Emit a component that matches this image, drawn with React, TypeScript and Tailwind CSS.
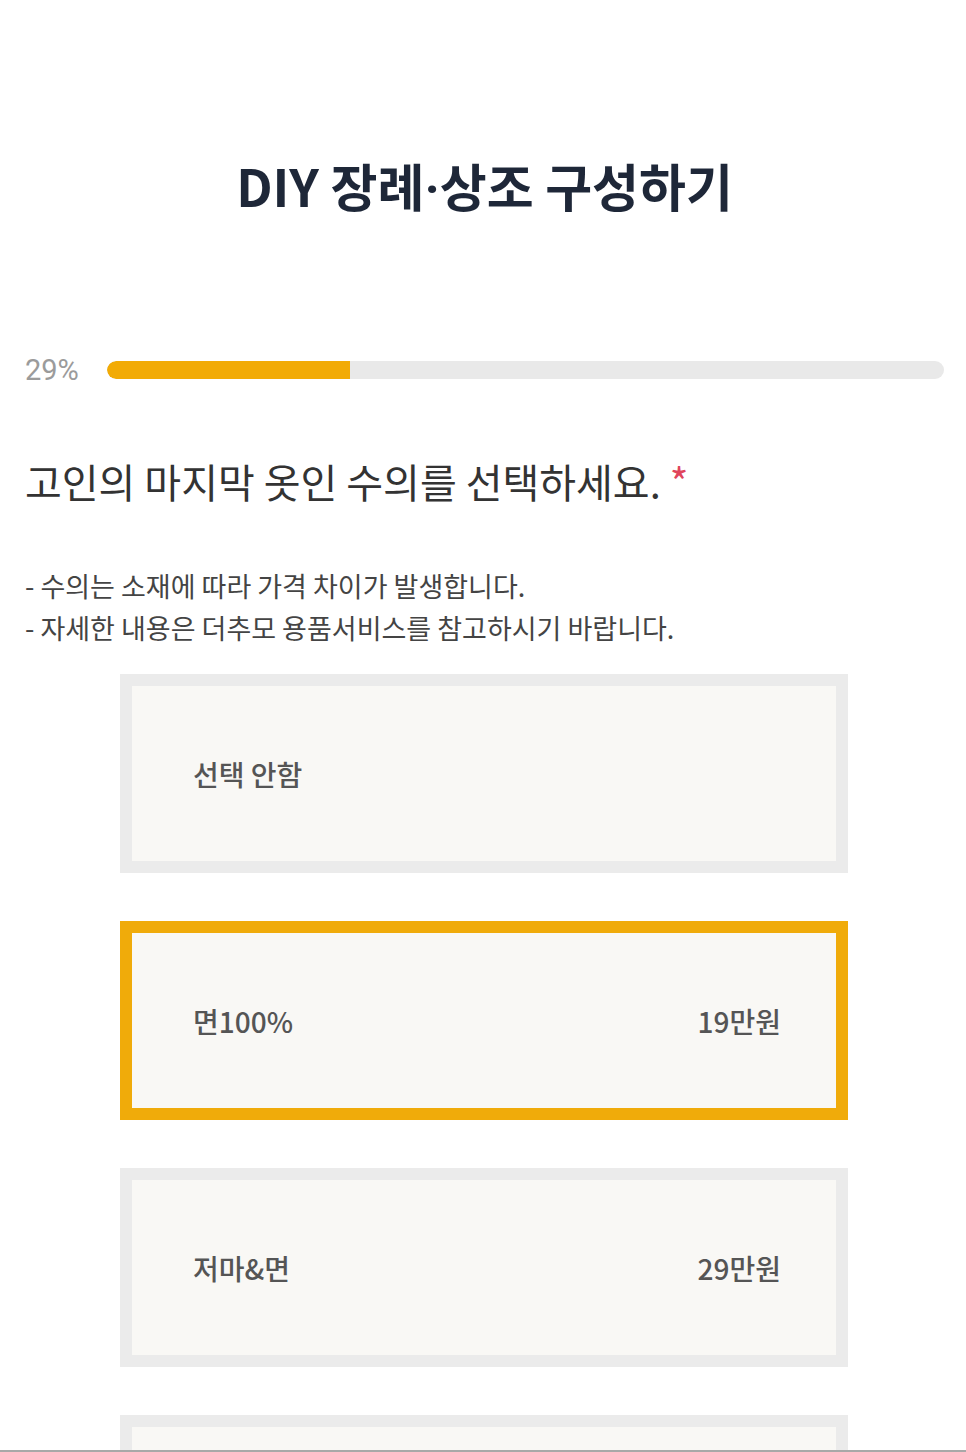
import React from 'react';

interface Option {
  label?: string;
  price?: string;
}

const options: Option[] = [
  { label: '선택 안함' },
  { label: '면100%', price: '19만원' },
  { label: '저마&면', price: '29만원' },
  {},
];

const kr = { fontFamily: '"Noto Sans CJK KR", "Noto Sans", sans-serif' };

function ProgressBar({ percent }: { percent: number }) {
  return (
    <div className="flex items-center h-[24px]">
      <span className="w-[82px] text-[29px] leading-[24px] text-[#9b9b9b]" style={{ fontFamily: 'Roboto, "Liberation Sans", sans-serif' }}>
        {percent}%
      </span>
      <div className="flex-1 h-[18px] rounded-full bg-[#e9e9e9] overflow-hidden">
        <div className="h-full rounded-l-full bg-[#f2ab05]" style={{ width: `${percent}%` }} />
      </div>
    </div>
  );
}

function OptionCard({ option, selected }: { option: Option; selected: boolean }) {
  return (
    <div
      className={
        selected
          ? 'h-[199px] border-[12px] border-[#f0ab0a] bg-[#f9f8f5] flex items-center justify-between pl-[61px] pr-[55px]'
          : 'h-[199px] border-[12px] border-[#ebebeb] bg-[#f9f8f5] flex items-center justify-between pl-[61px] pr-[55px]'
      }
    >
      {option.label && <span className="text-[28px] font-medium text-[#555555]">{option.label}</span>}
      {option.price && <span className="text-[28px] font-medium text-[#555555]">{option.price}</span>}
    </div>
  );
}

export default function App() {
  return (
    <div className="min-h-screen bg-white pl-[25px] pr-[22px] pb-[60px]" style={kr}>
      <h1 className="pt-[155px] text-center text-[51px] leading-[60px] font-bold text-[#1e2738]">
        DIY 장례<span className="leading-none" style={{ fontFamily: 'Roboto, sans-serif' }}>·</span>상조 구성하기
      </h1>

      <div className="mt-[143px]">
        <ProgressBar percent={29} />
      </div>

      <h2 className="mt-[76px] text-[40px] leading-[46px] font-normal text-[#333333]">
        고인의 마지막 옷인 수의를 선택하세요. <span className="text-[#e0455c]">*</span>
      </h2>

      <div className="mt-[61px] text-[27px] leading-[42px] text-[#444444]">
        <p>- 수의는 소재에 따라 가격 차이가 발생합니다.</p>
        <p>- 자세한 내용은 더추모 용품서비스를 참고하시기 바랍니다.</p>
      </div>

      <div className="mt-[25px] ml-[95px] w-[728px] flex flex-col gap-[48px]">
        {options.map((o, i) => (
          <OptionCard key={i} option={o} selected={i === 1} />
        ))}
      </div>

      <div className="fixed left-0 right-0 bottom-0 h-[2px] bg-[#a8a8a8]" />
    </div>
  );
}
